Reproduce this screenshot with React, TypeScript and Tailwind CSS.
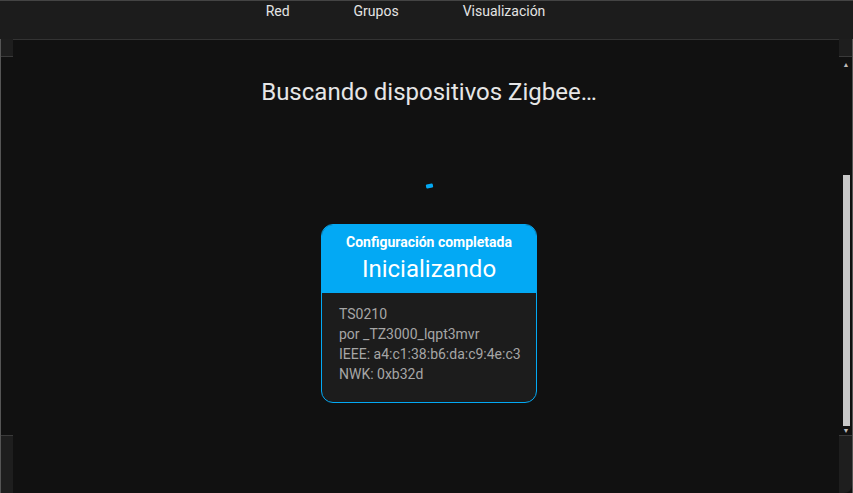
import React from "react";

const tabs = ["Red", "Grupos", "Visualización"];

function SideStrip({ right }: { right?: boolean }) {
  return (
    <div className={`flex h-full flex-col ${right ? "w-[14px] border-r border-[#555]" : "w-[13px] border-l border-[#555]"}`}>
      <div className="h-[18px] border-b border-[#3a3a3a] bg-[#1e1e1e]" />
      <div className="relative flex-1 bg-[#111]">
        {right && (
          <div className="absolute inset-y-0 left-[3px] flex w-[8px] flex-col items-center">
            <span className="mt-[5px] text-[7px] leading-none text-[#bbb]">▲</span>
            <div className="mt-[106px] h-[252px] w-[7px] bg-[#c8c8c8]" />
            <span className="mt-[2px] text-[7px] leading-none text-[#bbb]">▼</span>
          </div>
        )}
      </div>
      <div className={`h-[58px] border-t border-[#3a3a3a] bg-[#1e1e1e] ${right ? "rounded-br-[8px]" : ""}`} />
    </div>
  );
}

export default function App() {
  return (
    <div className="flex h-[493px] w-[853px] flex-col overflow-hidden bg-[#111] font-['Roboto',sans-serif]">
      <header className="flex h-[39px] shrink-0 justify-center border-t border-[#444] bg-[#1c1c1c] pr-[42px] text-[14px] text-[#e4e4e4]">
        <nav className="flex gap-[64px] pt-[2px]">
          {tabs.map((t) => (
            <span key={t} className="leading-[16px]">{t}</span>
          ))}
        </nav>
      </header>
      <div className="flex min-h-0 flex-1">
        <SideStrip />
        <main className="flex flex-1 flex-col items-center border-t border-[#333] bg-[#111] pl-[6px]">
          <h1 className="mt-[38px] text-[24px] leading-[28px] text-[#e6e6e6]">Buscando dispositivos Zigbee…</h1>
          <div className="mt-[78px] h-[4px] w-[7px] -rotate-12 rounded-[1px] bg-[#03a9f4]" />
          <section className="mt-[36px] w-[216px] overflow-hidden rounded-[12px] border border-[#03a9f4] bg-[#1c1c1c]">
            <div className="flex h-[68px] flex-col items-center bg-[#03a9f4] pt-[8px] text-white">
              <span className="text-[14px] font-bold leading-[18px]">Configuración completada</span>
              <span className="mt-[3px] text-[24px] leading-[30px]">Inicializando</span>
            </div>
            <div className="whitespace-nowrap pb-[18px] pl-[17px] pr-[8px] pt-[11px] text-[14px] leading-[20px] text-[#a6a6a6]">
              <p>TS0210</p>
              <p>por _TZ3000_lqpt3mvr</p>
              <p>IEEE: a4:c1:38:b6:da:c9:4e:c3</p>
              <p>NWK: 0xb32d</p>
            </div>
          </section>
        </main>
        <SideStrip right />
      </div>
    </div>
  );
}
